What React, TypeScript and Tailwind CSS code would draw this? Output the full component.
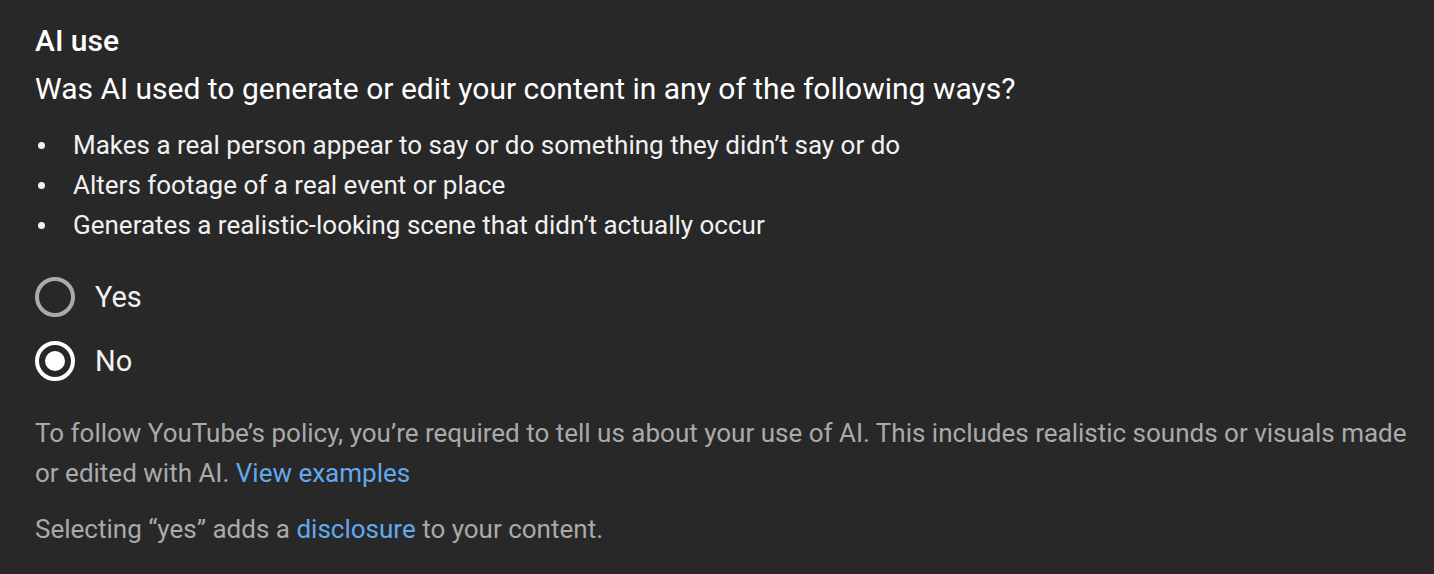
import React, { useState } from "react";

const bullets = [
	"Makes a real person appear to say or do something they didn\u2019t say or do",
	"Alters footage of a real event or place",
	"Generates a realistic-looking scene that didn\u2019t actually occur",
];

function Radio({
	label,
	checked,
	onSelect,
}: {
	label: string;
	checked: boolean;
	onSelect: () => void;
}) {
	return (
		<button
			type="button"
			onClick={onSelect}
			className="flex h-16 items-center gap-[20px] text-left"
		>
			<span
				className={`flex h-[40px] w-[40px] items-center justify-center rounded-full border-[4px] ${
					checked ? "border-white" : "border-[#aaaaaa]"
				}`}
			>
				{checked && <span className="h-[20px] w-[20px] rounded-full bg-white" />}
			</span>
			<span className="text-[29px] leading-none text-[#f1f1f1]">{label}</span>
		</button>
	);
}

export default function App() {
	const [answer, setAnswer] = useState<"yes" | "no">("no");

	return (
		<div
			className="min-h-[574px] w-full bg-[#282828] pl-[35px] pr-[20px] pt-[23px]"
			style={{ fontFamily: "Roboto, 'Noto Sans', sans-serif" }}
		>
			<h2 className="text-[30px] font-medium leading-[36px] text-white">AI use</h2>
			<p className="mt-[10px] text-[30px] leading-[40px] text-white">
				Was AI used to generate or edit your content in any of the following ways?
			</p>

			<ul className="mt-[16px] flex flex-col">
				{bullets.map((item) => (
					<li key={item} className="flex items-center text-[26px] leading-[40px] text-[#f1f1f1]">
						<span className="ml-[3px] mr-[28px] h-[7px] w-[7px] rounded-full bg-[#f1f1f1]" />
						{item}
					</li>
				))}
			</ul>

			<div className="mt-[20px] flex flex-col">
				<Radio label="Yes" checked={answer === "yes"} onSelect={() => setAnswer("yes")} />
				<Radio label="No" checked={answer === "no"} onSelect={() => setAnswer("no")} />
			</div>

			<p className="mt-[20px] max-w-[1385px] text-[26px] leading-[40px] text-[#aaaaaa]">
				To follow YouTube&rsquo;s policy, you&rsquo;re required to tell us about your use of AI. This
				includes realistic sounds or visuals made or edited with AI.{" "}
				<a href="#" className="text-[#62a8ee]">
					View examples
				</a>
			</p>
			<p className="mt-[16px] text-[26px] leading-[40px] text-[#aaaaaa]">
				Selecting &ldquo;yes&rdquo; adds a{" "}
				<a href="#" className="text-[#62a8ee]">
					disclosure
				</a>{" "}
				to your content.
			</p>
		</div>
	);
}
